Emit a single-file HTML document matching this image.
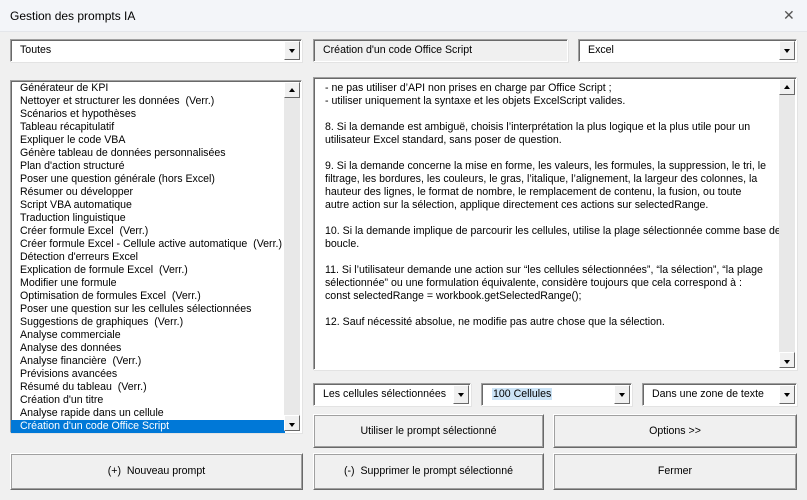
<!DOCTYPE html>
<html><head><meta charset="utf-8"><style>
*{box-sizing:border-box;margin:0;padding:0}
body{width:807px;height:500px;overflow:hidden;background:#f0f0f0;font-family:"Liberation Sans",sans-serif;font-size:10.6px;color:#000;position:relative}
.title{position:absolute;left:0;top:0;width:807px;height:32px;background:#f3f5f9;border-bottom:1px solid #e4e6ea}
.title .t{position:absolute;left:10px;top:9px;font-size:12px}
.title .close{position:absolute;left:783px;top:7px;font-size:14px;color:#555}
.box{position:absolute;background:#fff;border:1px solid;border-color:#a0a0a0 #fff #fff #a0a0a0;box-shadow:inset 1px 1px 0 #696969,1px 1px 0 #e3e3e3}
.dd{position:absolute;right:1px;top:1px;bottom:1px;width:16px;background:#f0f0f0;border:1px solid;border-color:#fff #696969 #696969 #fff}
.dd:after{content:"";position:absolute;left:4px;top:7px;border-left:3.5px solid transparent;border-right:3.5px solid transparent;border-top:4px solid #000}
.dd.up:after{top:5px;border-top:none;border-bottom:4px solid #000}
.tx{position:absolute;left:9px;top:4px;white-space:pre}
.list{position:absolute;left:10px;top:80px;width:292px;height:353px}
.list .it{height:13px;line-height:13px;padding-left:9px;white-space:pre}
.sel{background:#0078d7;color:#fff}
.sb{position:absolute;right:1px;top:1px;bottom:1px;width:16px;background:#e8e8e8}
.sb .dd{left:0;right:0;top:0;height:16px;bottom:auto}
.sb .dd.dn{top:auto;bottom:0}
.text{position:absolute;left:313px;top:77px;width:484px;height:293px}
.text p{position:absolute;left:11px;top:4px;width:460px;line-height:13px;white-space:pre;overflow:hidden}
.btn{position:absolute;background:#f0f0f0;border:1px solid;border-color:#fff #696969 #696969 #fff;box-shadow:1px 1px 0 #a0a0a0 inset,inset -1px -1px 0 #a0a0a0;text-align:center;white-space:pre}
</style></head><body>
<div class="title"><span class="t">Gestion des prompts IA</span><span class="close">✕</span></div>

<div class="box" style="left:10px;top:39px;width:292px;height:23px"><span class="tx">Toutes</span><div class="dd"></div></div>
<div class="box" style="left:313px;top:39px;width:255px;height:23px;background:#f0f0f0"><span class="tx">Création d'un code Office Script</span></div>
<div class="box" style="left:578px;top:39px;width:219px;height:23px"><span class="tx">Excel</span><div class="dd"></div></div>

<div class="box list">
<div class="it" style="margin-top:1px">Générateur de KPI</div>
<div class="it">Nettoyer et structurer les données  (Verr.)</div>
<div class="it">Scénarios et hypothèses</div>
<div class="it">Tableau récapitulatif</div>
<div class="it">Expliquer le code VBA</div>
<div class="it">Génère tableau de données personnalisées</div>
<div class="it">Plan d'action structuré</div>
<div class="it">Poser une question générale (hors Excel)</div>
<div class="it">Résumer ou développer</div>
<div class="it">Script VBA automatique</div>
<div class="it">Traduction linguistique</div>
<div class="it">Créer formule Excel  (Verr.)</div>
<div class="it">Créer formule Excel - Cellule active automatique  (Verr.)</div>
<div class="it">Détection d'erreurs Excel</div>
<div class="it">Explication de formule Excel  (Verr.)</div>
<div class="it">Modifier une formule</div>
<div class="it">Optimisation de formules Excel  (Verr.)</div>
<div class="it">Poser une question sur les cellules sélectionnées</div>
<div class="it">Suggestions de graphiques  (Verr.)</div>
<div class="it">Analyse commerciale</div>
<div class="it">Analyse des données</div>
<div class="it">Analyse financière  (Verr.)</div>
<div class="it">Prévisions avancées</div>
<div class="it">Résumé du tableau  (Verr.)</div>
<div class="it">Création d'un titre</div>
<div class="it">Analyse rapide dans un cellule</div>
<div class="it sel" style="width:274px">Création d'un code Office Script</div>
<div class="sb"><div class="dd up"></div><div class="dd dn"></div></div>
</div>

<div class="box text"><p>- ne pas utiliser d’API non prises en charge par Office Script ;
- utiliser uniquement la syntaxe et les objets ExcelScript valides.

8. Si la demande est ambiguë, choisis l’interprétation la plus logique et la plus utile pour un
utilisateur Excel standard, sans poser de question.

9. Si la demande concerne la mise en forme, les valeurs, les formules, la suppression, le tri, le
filtrage, les bordures, les couleurs, le gras, l’italique, l’alignement, la largeur des colonnes, la
hauteur des lignes, le format de nombre, le remplacement de contenu, la fusion, ou toute
autre action sur la sélection, applique directement ces actions sur selectedRange.

10. Si la demande implique de parcourir les cellules, utilise la plage sélectionnée comme base de
boucle.

11. Si l’utilisateur demande une action sur “les cellules sélectionnées”, “la sélection”, “la plage
sélectionnée” ou une formulation équivalente, considère toujours que cela correspond à :
const selectedRange = workbook.getSelectedRange();

12. Sauf nécessité absolue, ne modifie pas autre chose que la sélection.</p>
<div class="sb"><div class="dd up"></div><div class="dd dn"></div></div>
</div>

<div class="box" style="left:313px;top:383px;width:158px;height:23px"><span class="tx">Les cellules sélectionnées</span><div class="dd"></div></div>
<div class="box" style="left:481px;top:383px;width:151px;height:23px"><span class="tx" style="background:#cce4f7;left:10px;padding:0 1px">100 Cellules</span><div class="dd"></div></div>
<div class="box" style="left:642px;top:383px;width:155px;height:23px"><span class="tx">Dans une zone de texte</span><div class="dd"></div></div>

<div class="btn" style="left:313px;top:414px;width:231px;height:34px;line-height:32px">Utiliser le prompt sélectionné</div>
<div class="btn" style="left:553px;top:414px;width:244px;height:34px;line-height:32px">Options &gt;&gt;</div>
<div class="btn" style="left:10px;top:453px;width:293px;height:37px;line-height:35px">(+)  Nouveau prompt</div>
<div class="btn" style="left:313px;top:453px;width:231px;height:37px;line-height:35px">(-)  Supprimer le prompt sélectionné</div>
<div class="btn" style="left:553px;top:453px;width:244px;height:37px;line-height:35px">Fermer</div>
</body></html>
